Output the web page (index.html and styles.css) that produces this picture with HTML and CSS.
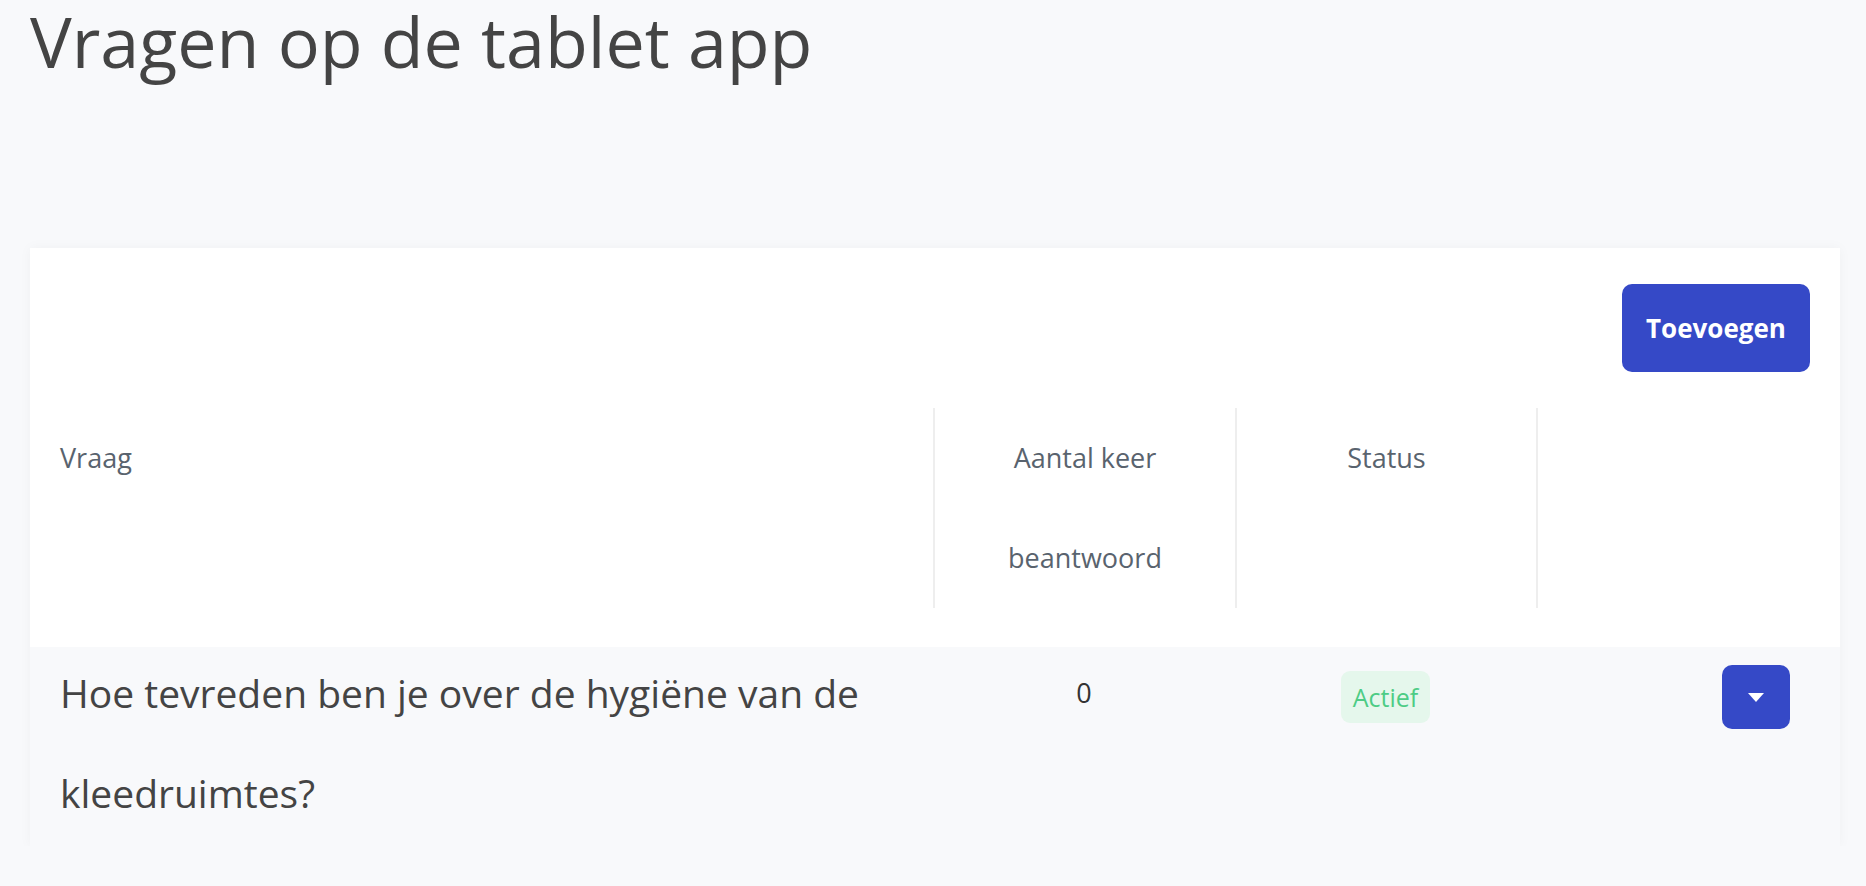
FILE: index.html
```html
<!DOCTYPE html>
<html lang="nl">
<head>
<meta charset="utf-8">
<title>Vragen op de tablet app</title>
<link rel="stylesheet" href="styles.css">
</head>
<body>
<main class="page">
  <h1 class="title">Vragen op de tablet app</h1>
  <section class="card">
    <div class="toolbar">
      <button class="btn-primary" type="button">Toevoegen</button>
    </div>
    <div class="table">
      <div class="thead">
        <div class="th th-left">Vraag</div>
        <div class="th">Aantal keer beantwoord</div>
        <div class="th">Status</div>
        <div class="th"></div>
      </div>
      <div class="tr">
        <div class="td td-question">Hoe tevreden ben je over de hygiëne van de kleedruimtes?</div>
        <div class="td td-center td-count">0</div>
        <div class="td td-status"><span class="badge">Actief</span></div>
        <div class="td td-actions">
          <button class="btn-drop" type="button" aria-label="Opties">
            <svg width="16" height="9" viewBox="0 0 16 9"><path d="M0 0h16L8 9z" fill="#fff"/></svg>
          </button>
        </div>
      </div>
    </div>
  </section>
</main>
</body>
</html>
```

FILE: styles.css
```css
* { box-sizing: border-box; }
html, body { margin: 0; padding: 0; }
body {
  background: #f8f9fb;
  font-family: "Open Sans", "Noto Sans", sans-serif;
  color: #444;
}
.page {
  padding: 0 26px 0 30px;
}
.title {
  margin: 0;
  font-size: 70px;
  line-height: 82px;
  font-weight: 400;
  color: #444;
}
.card {
  margin-top: 166px;
  background: #fff;
  box-shadow: 0 0 12px rgba(0, 0, 0, 0.04);
  padding-top: 36px;
}
.toolbar {
  display: flex;
  justify-content: flex-end;
  padding-right: 30px;
}
.btn-primary {
  height: 88px;
  width: 188px;
  border: 0;
  border-radius: 10px;
  background: #3549c7;
  color: #fff;
  font-family: inherit;
  font-weight: 700;
  font-size: 26px;
  cursor: pointer;
}
.table {
  margin-top: 36px;
}
.thead, .tr {
  display: grid;
  grid-template-columns: 903px 302px 301px 1fr;
}
.thead {
  margin-bottom: 39px;
}
.th {
  font-size: 27px;
  line-height: 100px;
  color: #59636e;
  text-align: center;
  padding: 0 30px;
  border-left: 2px solid #eeeeee;
}
.th-left {
  text-align: left;
  border-left: 0;
}
.tr {
  background: #f8f9fb;
  min-height: 199px;
}
.td {
  font-size: 27px;
  line-height: 100px;
}
.td-question {
  font-size: 39px;
  padding: 0 30px;
  margin-top: -4px;
  color: #444;
}
.td-center {
  text-align: center;
}
.td-count {
  color: #333;
  margin-top: -4px;
}
.td-status {
  display: flex;
  justify-content: center;
  align-items: flex-start;
  padding-top: 24px;
}
.badge {
  display: block;
  background: #e5f7ec;
  color: #4dcc85;
  font-size: 25px;
  line-height: 52px;
  padding: 0 12px;
  border-radius: 9px;
}
.td-actions {
  display: flex;
  justify-content: flex-end;
  align-items: flex-start;
  padding: 18px 50px 0 0;
}
.btn-drop {
  width: 68px;
  height: 64px;
  border: 0;
  border-radius: 10px;
  background: #3549c7;
  display: flex;
  align-items: center;
  justify-content: center;
  padding: 0;
  cursor: pointer;
}
```
